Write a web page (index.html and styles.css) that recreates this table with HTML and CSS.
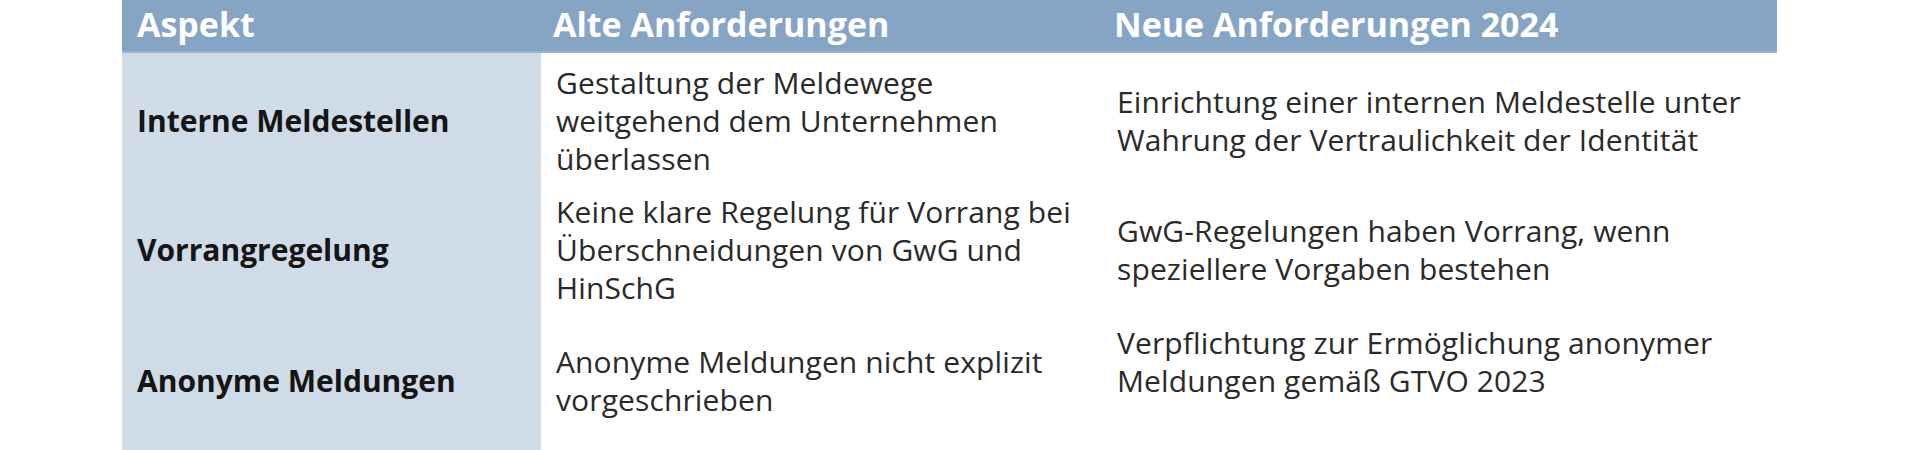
FILE: index.html
```html
<!DOCTYPE html>
<html lang="de">
<head>
<meta charset="utf-8">
<link rel="stylesheet" href="styles.css">
</head>
<body>
<div class="table">
  <div class="th">Aspekt</div>
  <div class="th">Alte Anforderungen</div>
  <div class="th">Neue Anforderungen 2024</div>

  <div class="aspect">Interne Meldestellen</div>
  <div class="cell">Gestaltung der Meldewege<br>weitgehend dem Unternehmen<br>überlassen</div>
  <div class="cell">Einrichtung einer internen Meldestelle unter<br>Wahrung der Vertraulichkeit der Identität</div>

  <div class="aspect">Vorrangregelung</div>
  <div class="cell">Keine klare Regelung für Vorrang bei<br>Überschneidungen von GwG und<br>HinSchG</div>
  <div class="cell">GwG-Regelungen haben Vorrang, wenn<br>speziellere Vorgaben bestehen</div>

  <div class="aspect">Anonyme Meldungen</div>
  <div class="cell">Anonyme Meldungen nicht explizit<br>vorgeschrieben</div>
  <div class="cell">Verpflichtung zur Ermöglichung anonymer<br>Meldungen gemäß GTVO 2023<br>&nbsp;</div>
</div>
</body>
</html>
```
FILE: styles.css
```css
html, body {
  margin: 0;
  padding: 0;
  background: #ffffff;
}
body {
  width: 1920px;
  height: 450px;
  overflow: hidden;
  font-family: "Open Sans", "Noto Sans", sans-serif;
}
.table {
  margin-left: 122px;
  width: 1655px;
  display: grid;
  grid-template-columns: 419px 561px 675px;
  grid-template-rows: 53px 136px 122px 139px;
  align-items: stretch;
}
.th {
  background: #86a5c5;
  color: #ffffff;
  font-weight: 700;
  font-size: 34px;
  line-height: 49px;
  padding-left: 15px;
  border-bottom: 2px solid #9bb5cf;
  white-space: nowrap;
}
.th + .th {
  padding-left: 12px;
}
.aspect {
  background: #cfdbe6;
  color: #151515;
  font-weight: 700;
  font-size: 30px;
  line-height: 38px;
  padding-left: 15px;
  display: flex;
  align-items: center;
  white-space: nowrap;
}
.cell {
  background: #ffffff;
  color: #2a2a2a;
  font-size: 30px;
  letter-spacing: 0.12px;
  line-height: 38px;
  padding-left: 15px;
  display: flex;
  align-items: center;
  white-space: nowrap;
}
```
